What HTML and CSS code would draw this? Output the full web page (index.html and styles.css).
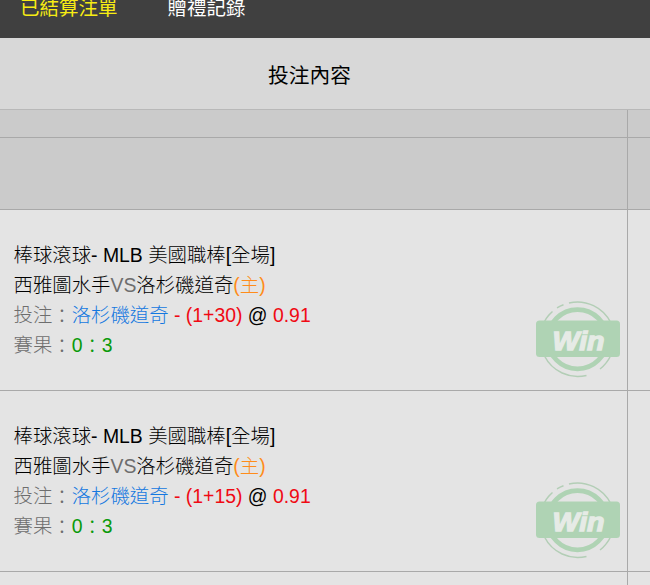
FILE: index.html
```html
<!DOCTYPE html>
<html lang="zh-Hant">
  <head>
    <meta charset="utf-8">
    <title>已結算注單</title>
    <link rel="stylesheet" href="styles.css">
  </head>
  <body>
    <svg class="defs" width="0" height="0">
      <symbol id="win" viewBox="0 0 86 78">
        <g fill="none">
          <circle class="ring" cx="42.5" cy="38.2" r="29.6" stroke-width="4.8"/>
          <path class="thin" d="M13.5 14.6A37.3 37.3 0 0 1 17.5 10.5M22 6.8A37.3 37.3 0 0 1 28.5 3.7M34 1.9A37.3 37.3 0 0 1 76 22M75.5 55A37.3 37.3 0 0 1 65 68M51.5 74.4A37.3 37.3 0 0 1 9.5 55M9.5 20.5A37.3 37.3 0 0 1 13.5 14.6"/>
        </g>
        <rect class="band" x="1" y="19.6" width="84" height="36.5" rx="3.5"/>
        <text class="word" x="17.5" y="48.5" textLength="52" lengthAdjust="spacingAndGlyphs">Win</text>
      </symbol>
    </svg>

    <nav class="tabs">
      <a class="active">已結算注單</a>
      <a>贈禮記錄</a>
    </nav>

    <div class="head">投注內容</div>
    <div class="row blank short"><div class="cell"></div></div>
    <div class="row blank"><div class="cell"></div></div>

    <div class="row bet">
      <div class="cell">
        <div class="info">
          <div>棒球滾球- MLB 美國職棒[全場]</div>
          <div>西雅圖水手<span class="gray">VS</span>洛杉磯道奇<span class="home">(主)</span></div>
          <div><span class="gray">投注<span class="colon">：</span></span><span class="team">洛杉磯道奇</span> <span class="odds">- (1+30)</span> @ <span class="odds">0.91</span></div>
          <div><span class="gray">賽果<span class="colon">：</span></span><span class="score">0<span class="colon">：</span>3</span></div>
        </div>
        <svg class="win"><use href="#win"/></svg>
      </div>
    </div>

    <div class="row bet">
      <div class="cell">
        <div class="info">
          <div>棒球滾球- MLB 美國職棒[全場]</div>
          <div>西雅圖水手<span class="gray">VS</span>洛杉磯道奇<span class="home">(主)</span></div>
          <div><span class="gray">投注<span class="colon">：</span></span><span class="team">洛杉磯道奇</span> <span class="odds">- (1+15)</span> @ <span class="odds">0.91</span></div>
          <div><span class="gray">賽果<span class="colon">：</span></span><span class="score">0<span class="colon">：</span>3</span></div>
        </div>
        <svg class="win"><use href="#win"/></svg>
      </div>
    </div>

    <div class="row last"><div class="cell"></div></div>
  </body>
</html>
```

FILE: styles.css
```css
* {
  box-sizing: border-box;
}
body {
  margin: 0;
  height: 585px;
  overflow: hidden;
  display: flex;
  flex-direction: column;
  background: #e4e4e4;
  color: #000;
  font-family: "Liberation Sans", "Noto Sans CJK TC", sans-serif;
  font-size: 19.4px;
}
.defs {
  display: block;
  flex: none;
}
.tabs {
  flex: none;
  display: flex;
  gap: 50px;
  height: 38px;
  padding-left: 20px;
  background: #404040;
  color: #fff;
  font-size: 19.5px;
  line-height: 30px;
}
.tabs a {
  margin-top: -7px;
}
.tabs .active {
  color: #f7ec13;
}
.head {
  flex: none;
  height: 72px;
  padding-right: 31px;
  border-bottom: 1px solid #b8b8b8;
  background: #d8d8d8;
  font-size: 20.7px;
  line-height: 76px;
  text-align: center;
}
.row {
  flex: none;
  display: flex;
  height: 181px;
  border-bottom: 1px solid #a9a9a9;
}
.cell {
  display: flex;
  align-items: flex-start;
  justify-content: space-between;
  width: 628px;
  padding: 30px 7px 0 13.5px;
  border-right: 1px solid #a9a9a9;
}
.blank {
  height: 72px;
  background: #cbcbcb;
}
.short {
  height: 28px;
}
.last {
  height: 20px;
}
.info {
  font-weight: 300;
  line-height: 30px;
  white-space: nowrap;
}
.info > div {
  height: 30px;
}
.colon {
  line-height: 1;
  vertical-align: -1px;
}
.gray {
  color: #6e6e6e;
}
.home {
  color: #ff8c1a;
}
.team {
  color: #1478e0;
}
.odds {
  color: #f00a14;
}
.score {
  color: #0a9a0a;
}
.win {
  width: 86px;
  height: 78px;
  margin: 61px -1px 0 0;
}
.ring {
  stroke: #afd3b4;
}
.thin {
  stroke: #b3ceb6;
  stroke-width: 1.5;
}
.band {
  fill: #afd3b4;
}
.word {
  fill: #e6ebe6;
  stroke: #e6ebe6;
  stroke-width: 1.3;
  font: italic bold 26px "Liberation Sans", sans-serif;
}
```
